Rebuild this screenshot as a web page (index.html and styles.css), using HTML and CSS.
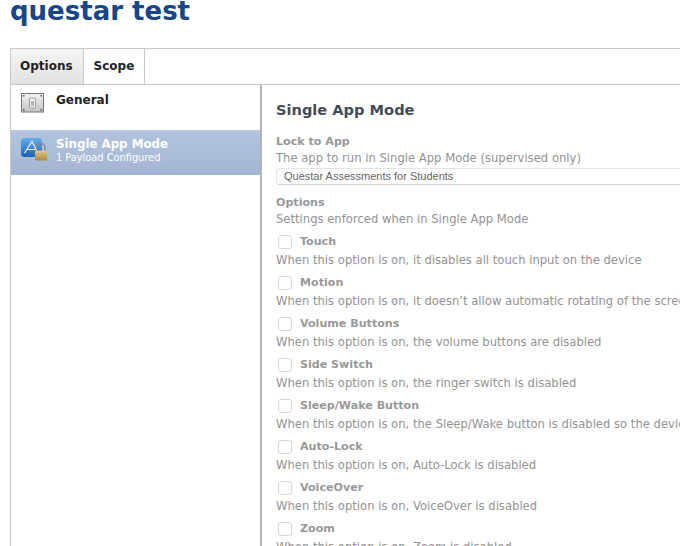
FILE: index.html
```html
<!DOCTYPE html>
<html lang="en">
<head>
<meta charset="utf-8">
<title>questar test</title>
<link rel="stylesheet" href="styles.css">
</head>
<body>
<div class="page">
  <h1 class="title">questar test</h1>
  <div class="panel">
    <div class="tabs">
      <div class="tab tab-active">Options</div>
      <div class="tab">Scope</div>
    </div>
    <div class="body">
      <aside class="sidebar">
        <div class="item">
          <svg class="icon" width="24" height="20" viewBox="0 0 24 20"><defs><linearGradient id="m" x1="0" y1="0" x2="0" y2="1"><stop offset="0" stop-color="#f2f2f2"/><stop offset="1" stop-color="#c4c4c4"/></linearGradient></defs><rect x="0.5" y="0.5" width="22" height="18.5" fill="url(#m)" stroke="#777"/><rect x="8.5" y="5" width="6" height="10" rx="1" fill="#f0f0f0" stroke="#9a9a9a"/><rect x="10" y="8" width="3" height="5" fill="#b4b4b4"/><rect x="2" y="2" width="1.5" height="1.5" fill="#555"/><rect x="19.5" y="2" width="1.5" height="1.5" fill="#555"/><rect x="2" y="16" width="1.5" height="1.5" fill="#555"/><rect x="19.5" y="16" width="1.5" height="1.5" fill="#555"/></svg>
          <div class="item-text"><div class="item-name">General</div></div>
        </div>
        <div class="item item-selected">
          <svg class="icon" width="26" height="23" viewBox="0 0 26 23"><defs><linearGradient id="b" x1="0" y1="0" x2="0" y2="1"><stop offset="0" stop-color="#62aeee"/><stop offset="1" stop-color="#1c62b8"/></linearGradient><linearGradient id="g" x1="0" y1="0" x2="0" y2="1"><stop offset="0" stop-color="#e4c884"/><stop offset="1" stop-color="#a98a44"/></linearGradient></defs><rect x="0" y="0" width="21" height="19" rx="3.5" fill="url(#b)"/><path d="M3.5 15 L11 3.5 L17 15 M6 11.5 H15" stroke="#eef5fc" stroke-width="1.2" fill="none"/><path d="M16 13 V9.5 a4 4 0 0 1 8 0 V13" stroke="#8a8a8a" stroke-width="1.6" fill="none"/><rect x="14" y="12.5" width="12" height="10" rx="1" fill="url(#g)"/></svg>
          <div class="item-text"><div class="item-name">Single App Mode</div><div class="item-sub">1 Payload Configured</div></div>
        </div>
      </aside>
      <main class="main">
        <h2 class="heading">Single App Mode</h2>
        <div class="label">Lock to App</div>
        <div class="desc">The app to run in Single App Mode (supervised only)</div>
        <div class="select">Questar Assessments for Students</div>
        <div class="label">Options</div>
        <div class="desc">Settings enforced when in Single App Mode</div>
        <div class="option"><span class="check"></span><span class="label">Touch</span></div>
        <div class="desc">When this option is on, it disables all touch input on the device</div>
        <div class="option"><span class="check"></span><span class="label">Motion</span></div>
        <div class="desc">When this option is on, it doesn’t allow automatic rotating of the screen</div>
        <div class="option"><span class="check"></span><span class="label">Volume Buttons</span></div>
        <div class="desc">When this option is on, the volume buttons are disabled</div>
        <div class="option"><span class="check"></span><span class="label">Side Switch</span></div>
        <div class="desc">When this option is on, the ringer switch is disabled</div>
        <div class="option"><span class="check"></span><span class="label">Sleep/Wake Button</span></div>
        <div class="desc">When this option is on, the Sleep/Wake button is disabled so the device</div>
        <div class="option"><span class="check"></span><span class="label">Auto-Lock</span></div>
        <div class="desc">When this option is on, Auto-Lock is disabled</div>
        <div class="option"><span class="check"></span><span class="label">VoiceOver</span></div>
        <div class="desc">When this option is on, VoiceOver is disabled</div>
        <div class="option"><span class="check"></span><span class="label">Zoom</span></div>
        <div class="desc">When this option is on, Zoom is disabled</div>
      </main>
    </div>
  </div>
</div>
</body>
</html>
```
FILE: styles.css
```css
html, body { margin: 0; padding: 0; background: #fff; }
.page { width: 680px; height: 546px; overflow: hidden; font-family: "DejaVu Sans", sans-serif; }
.title { margin: -7px 0 0 10px; height: 55px; font-size: 26px; line-height: 36px; font-weight: bold; color: #17468a; }
.panel { margin-left: 10px; width: 700px; border-top: 1px solid #c8c8c8; border-left: 1px solid #c8c8c8; }
.tabs { display: flex; height: 35px; border-bottom: 1px solid #c8c8c8; }
.tab { padding: 0 10px 0 9px; line-height: 35px; font-size: 12px; font-weight: bold; color: #222; border-right: 1px solid #c8c8c8; }
.tab-active { background: linear-gradient(#f4f4f4, #e2e2e2); margin-right: 1px; }
.body { display: flex; height: 470px; }
.sidebar { width: 249px; flex: none; border-right: 2px solid #b4b4b4; }
.item { display: flex; height: 45px; padding: 8px 0 0 10px; gap: 11px; box-sizing: border-box; }
.item-selected { background: linear-gradient(#b2c4de, #a3b5d2); gap: 9px; }
.icon { flex: none; }
.item-name { font-size: 12px; font-weight: bold; line-height: 15px; color: #222; }
.item-selected .item-name { color: #fff; font-size: 11.8px; line-height: 13px; }
.item-sub { font-size: 9.8px; line-height: 14px; color: #fff; }
.main { padding: 15px 0 0 14px; flex: 1; min-width: 0; white-space: nowrap; }
.heading { margin: 0 0 14px; font-size: 14.6px; line-height: 20px; font-weight: bold; color: #454c55; }
.label { font-size: 11.1px; line-height: 16px; font-weight: bold; color: #989898; }
.desc { font-size: 11.6px; line-height: 16px; color: #939393; }
.select { margin: 2px 0 10px; height: 15px; line-height: 15px; padding-left: 7px; font-family: "Liberation Sans", sans-serif; font-size: 11px; color: #666; border: 1px solid #e4e4e4; border-bottom-color: #d4d4d4; border-radius: 4px; }
.option { display: flex; align-items: center; gap: 8px; height: 16px; margin: 7px 0 2px 2px; }
.check { width: 12px; height: 12px; border: 1px solid #d8d8d8; border-radius: 3px; background: #fff; }
```
